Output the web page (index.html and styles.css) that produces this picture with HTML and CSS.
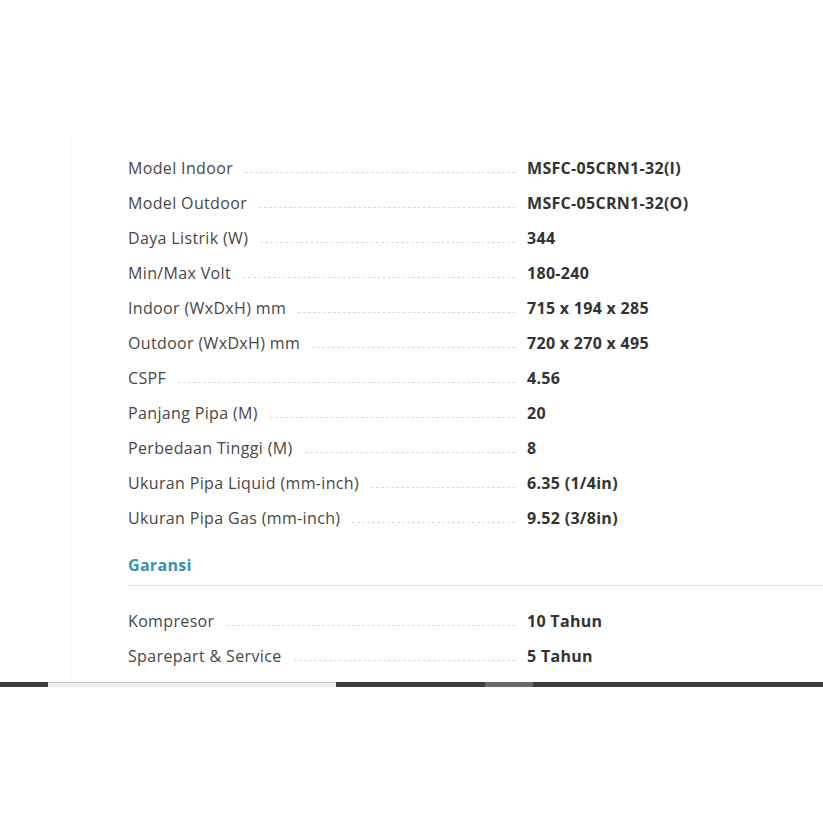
FILE: index.html
```html
<!DOCTYPE html>
<html lang="id">
<head>
<meta charset="utf-8">
<title>Spesifikasi</title>
<link rel="stylesheet" href="styles.css">
</head>
<body>
<div class="page">
  <div class="sheet">
    <div class="specs">
      <div class="row"><div class="label-wrap"><span class="label">Model Indoor</span><span class="dots"></span></div><span class="value">MSFC-05CRN1-32(I)</span></div>
      <div class="row"><div class="label-wrap"><span class="label">Model Outdoor</span><span class="dots"></span></div><span class="value">MSFC-05CRN1-32(O)</span></div>
      <div class="row"><div class="label-wrap"><span class="label">Daya Listrik (W)</span><span class="dots"></span></div><span class="value">344</span></div>
      <div class="row"><div class="label-wrap"><span class="label">Min/Max Volt</span><span class="dots"></span></div><span class="value">180-240</span></div>
      <div class="row"><div class="label-wrap"><span class="label">Indoor (WxDxH) mm</span><span class="dots"></span></div><span class="value">715 x 194 x 285</span></div>
      <div class="row"><div class="label-wrap"><span class="label">Outdoor (WxDxH) mm</span><span class="dots"></span></div><span class="value">720 x 270 x 495</span></div>
      <div class="row"><div class="label-wrap"><span class="label">CSPF</span><span class="dots"></span></div><span class="value">4.56</span></div>
      <div class="row"><div class="label-wrap"><span class="label">Panjang Pipa (M)</span><span class="dots"></span></div><span class="value">20</span></div>
      <div class="row"><div class="label-wrap"><span class="label">Perbedaan Tinggi (M)</span><span class="dots"></span></div><span class="value">8</span></div>
      <div class="row"><div class="label-wrap"><span class="label">Ukuran Pipa Liquid (mm-inch)</span><span class="dots"></span></div><span class="value">6.35 (1/4in)</span></div>
      <div class="row"><div class="label-wrap"><span class="label">Ukuran Pipa Gas (mm-inch)</span><span class="dots"></span></div><span class="value">9.52 (3/8in)</span></div>
    </div>
    <h3 class="section-title">Garansi</h3>
    <div class="specs specs-warranty">
      <div class="row"><div class="label-wrap"><span class="label">Kompresor</span><span class="dots"></span></div><span class="value">10 Tahun</span></div>
      <div class="row"><div class="label-wrap"><span class="label">Sparepart &amp; Service</span><span class="dots"></span></div><span class="value">5 Tahun</span></div>
    </div>
  </div>
  <div class="bar">
    <span class="seg seg-dark seg-a"></span>
    <span class="seg seg-light"></span>
    <span class="seg seg-dark seg-b"></span>
    <span class="seg seg-mid"></span>
    <span class="seg seg-dark seg-c"></span>
  </div>
</div>
</body>
</html>
```

FILE: styles.css
```css
html, body {
  margin: 0;
  padding: 0;
  background: #ffffff;
}

body {
  font-family: "Open Sans", "Liberation Sans", sans-serif;
  color: #444444;
}

.page {
  padding-top: 137px;
}

.sheet {
  margin-left: 70px;
  border-left: 1px solid #f1f1f1;
  padding: 13px 0 9px 57px;
}

.specs {
  display: flex;
  flex-direction: column;
}

.row {
  display: flex;
  align-items: center;
  height: 35px;
}

.label-wrap {
  display: flex;
  align-items: center;
  width: 387px;
  flex-shrink: 0;
}

.label {
  font-size: 16px;
  letter-spacing: 0.35px;
  color: #474747;
  white-space: nowrap;
}

.dots {
  flex: 1;
  height: 10px;
  margin-left: 12px;
  border-bottom: 1px dashed #dcdcdc;
}

.value {
  margin-left: 12px;
  font-size: 16px;
  font-weight: 700;
  color: #333333;
  letter-spacing: 0.3px;
  white-space: nowrap;
}

.section-title {
  margin: 18px 0 0;
  padding-bottom: 8px;
  border-bottom: 1px solid #e2e2e2;
  font-size: 16px;
  line-height: 24px;
  font-weight: 700;
  letter-spacing: 0.3px;
  color: #3b8fb6;
}

.specs-warranty {
  margin-top: 17px;
}

.bar {
  display: flex;
  height: 5px;
}

.seg {
  display: block;
  height: 100%;
}

.seg-dark {
  background: #3f3b3c;
}

.seg-a {
  width: 48px;
}

.seg-light {
  width: 288px;
  background: #eeeeee;
  border-top: 1px solid #c9c9c9;
  box-sizing: border-box;
}

.seg-b {
  width: 149px;
}

.seg-mid {
  width: 48px;
  background: #6c6869;
}

.seg-c {
  flex: 1;
}
```
